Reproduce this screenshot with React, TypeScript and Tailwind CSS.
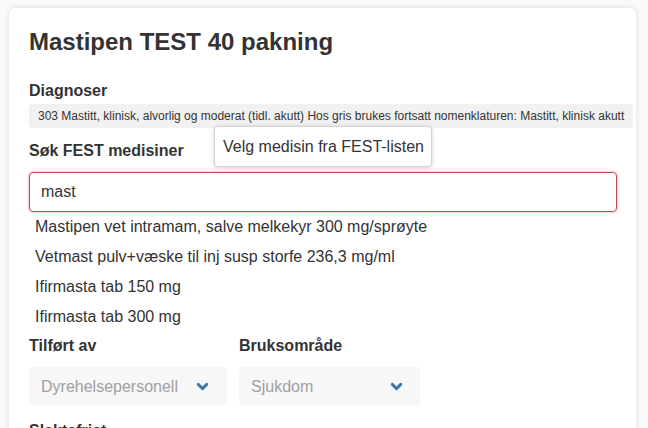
import { ChevronDown } from "lucide-react";

const options = [
  "Mastipen vet intramam, salve melkekyr 300 mg/sprøyte",
  "Vetmast pulv+væske til inj susp storfe 236,3 mg/ml",
  "Ifirmasta tab 150 mg",
  "Ifirmasta tab 300 mg",
];

export default function App() {
  return (
    <div
      className="min-h-screen bg-[#fafafa] pl-[9px] pt-2 text-[#333]"
      style={{ fontFamily: '"Liberation Sans", Arial, sans-serif' }}
    >
      <div className="relative h-[440px] w-[627px] overflow-hidden rounded-md bg-white pl-5 pr-[19px] pt-5 shadow-[0_0_6px_rgba(0,0,0,0.12)]">
        <h1 className="text-[24px] font-bold leading-[28px]">Mastipen TEST 40 pakning</h1>

        <div className="mt-[25px] text-[16px] font-bold leading-5">Diagnoser</div>
        <div className="mt-[3px] w-[604px] whitespace-nowrap rounded bg-[#f1f1f1] py-1 pl-[9px] text-[12px] leading-4">
          303 Mastitt, klinisk, alvorlig og moderat (tidl. akutt) Hos gris brukes fortsatt nomenklaturen: Mastitt, klinisk akutt
        </div>

        <div className="mt-[13px] text-[16px] font-bold leading-5">Søk FEST medisiner</div>
        <div className="mt-[11px] flex h-10 items-center rounded border border-[#b94a48] pl-[11px] text-[16px] shadow-[0_0_3px_rgba(185,74,72,0.5)]">
          mast
        </div>

        <ul>
          {options.map((o) => (
            <li key={o} className="flex h-[30px] items-center pl-[6px] text-[16px]">
              {o}
            </li>
          ))}
        </ul>

        <div className="mt-1 flex gap-3">
          <div className="w-[198px]">
            <div className="text-[16px] font-bold leading-5">Tilført av</div>
            <div className="mt-[11px] flex h-[39px] items-center justify-between rounded bg-[#f7f7f8] pl-3 pr-4 text-[16px] text-[#a0a0a0]">
              Dyrehelsepersonell
              <ChevronDown size={17} strokeWidth={4} className="text-[#3b77a8]" />
            </div>
          </div>
          <div className="w-[181px]">
            <div className="text-[16px] font-bold leading-5">Bruksområde</div>
            <div className="mt-[11px] flex h-[39px] items-center justify-between rounded bg-[#f7f7f8] pl-3 pr-[15px] text-[16px] text-[#a0a0a0]">
              Sjukdom
              <ChevronDown size={17} strokeWidth={4} className="text-[#3b77a8]" />
            </div>
          </div>
        </div>

        <div className="mt-[15px] text-[16px] font-bold leading-5">Slaktefrist</div>

        <div className="absolute left-[205px] top-[118px] flex h-[41px] w-[218px] items-center rounded border border-[#d4d4d4] bg-white pl-[8px] text-[16px] shadow-[0_1px_4px_rgba(0,0,0,0.18)]">
          Velg medisin fra FEST-listen
        </div>
      </div>
    </div>
  );
}
